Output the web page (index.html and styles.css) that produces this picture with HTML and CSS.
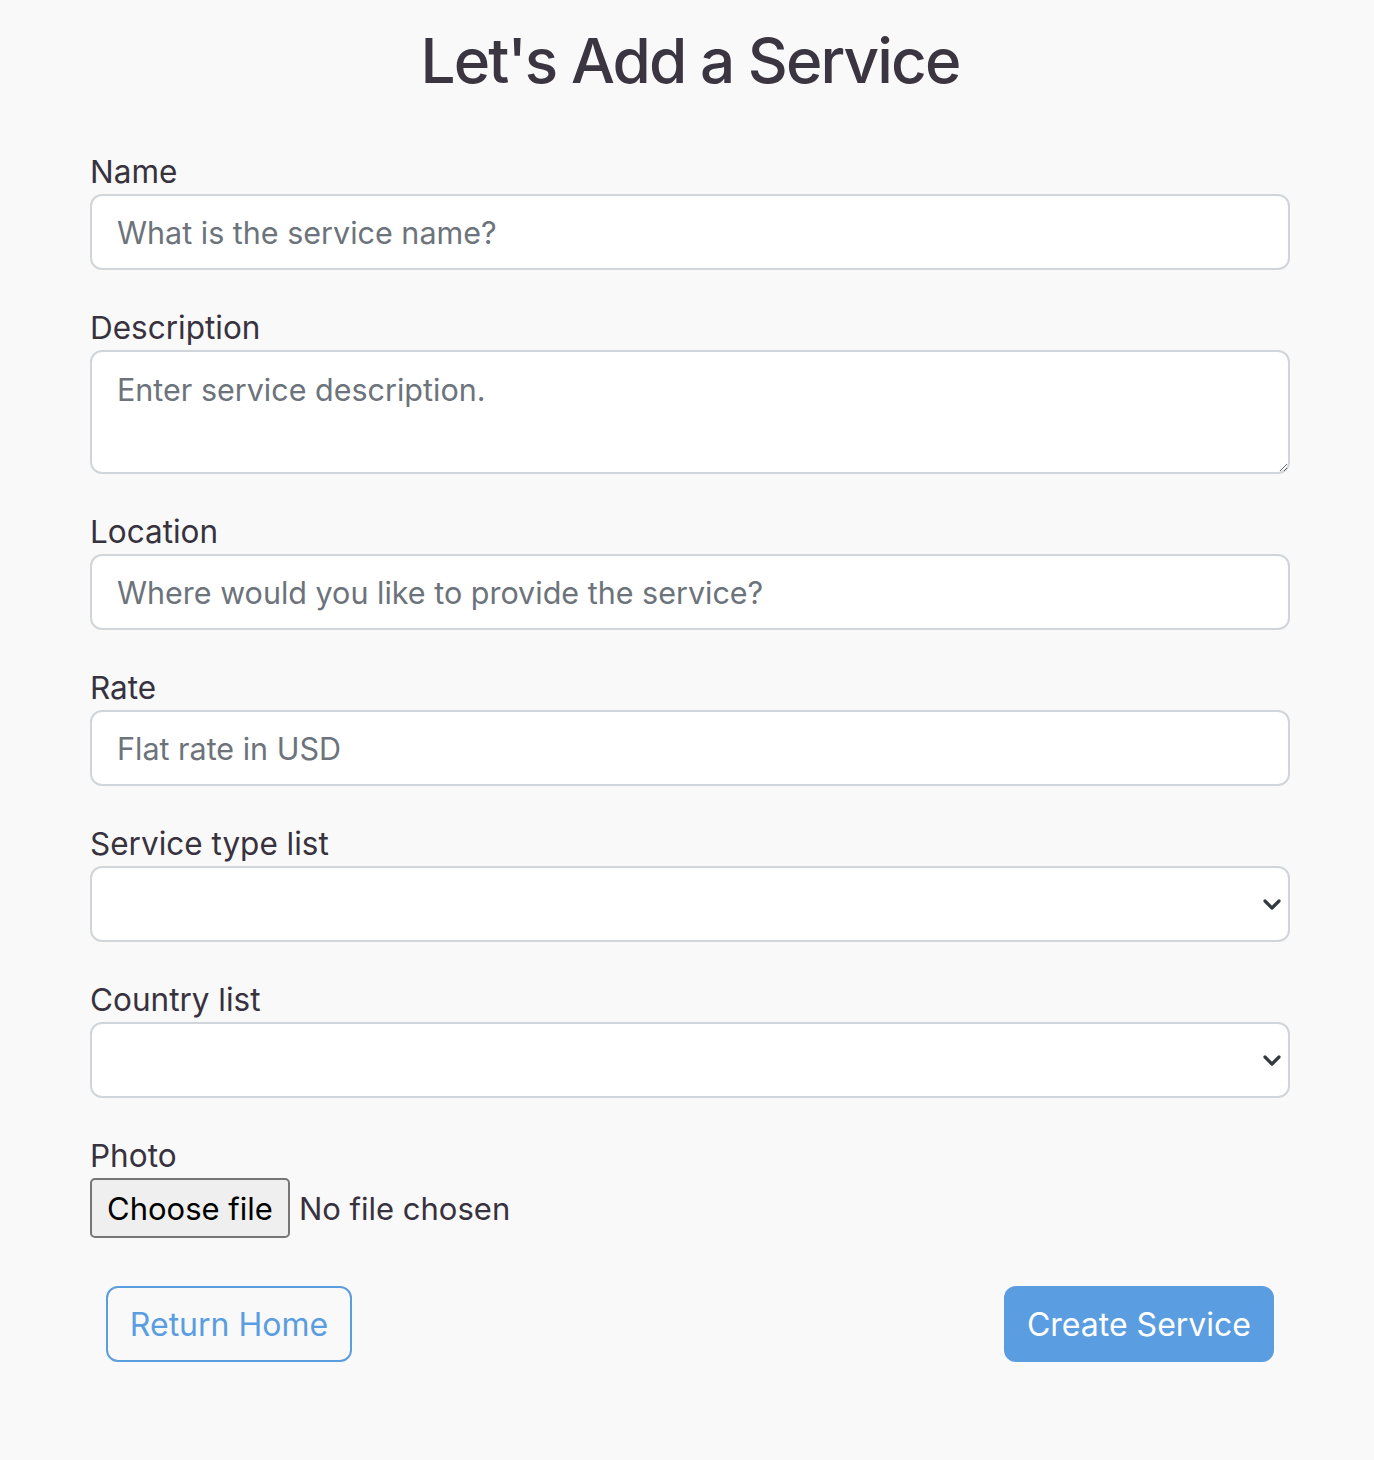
FILE: index.html
```html
<!DOCTYPE html>
<html lang="en">
<head>
<meta charset="utf-8">
<title>Let's Add a Service</title>
<link rel="stylesheet" href="styles.css">
</head>
<body>
<main class="page">
  <h1 class="title">Let's Add a Service</h1>
  <form class="form">
    <div class="group">
      <label class="label" for="name">Name</label>
      <input class="control" id="name" type="text" placeholder="What is the service name?">
    </div>
    <div class="group">
      <label class="label" for="desc">Description</label>
      <textarea class="control area" id="desc" placeholder="Enter service description."></textarea>
    </div>
    <div class="group">
      <label class="label" for="loc">Location</label>
      <input class="control" id="loc" type="text" placeholder="Where would you like to provide the service?">
    </div>
    <div class="group">
      <label class="label" for="rate">Rate</label>
      <input class="control" id="rate" type="text" placeholder="Flat rate in USD">
    </div>
    <div class="group">
      <label class="label" for="type">Service type list</label>
      <div class="select-wrap">
        <select class="control select" id="type"><option></option></select>
        <svg class="chevron" width="20" height="14" viewBox="0 0 20 14"><path d="M3 4l7 7 7-7" fill="none" stroke="#343a40" stroke-width="3.2" stroke-linecap="round" stroke-linejoin="round"/></svg>
      </div>
    </div>
    <div class="group">
      <label class="label" for="country">Country list</label>
      <div class="select-wrap">
        <select class="control select" id="country"><option></option></select>
        <svg class="chevron" width="20" height="14" viewBox="0 0 20 14"><path d="M3 4l7 7 7-7" fill="none" stroke="#343a40" stroke-width="3.2" stroke-linecap="round" stroke-linejoin="round"/></svg>
      </div>
    </div>
    <div class="group photo">
      <span class="label">Photo</span>
      <div class="file">
        <span class="file-btn">Choose file</span>
        <span class="file-text">No file chosen</span>
      </div>
    </div>
    <div class="actions">
      <a class="btn btn-outline" href="#">Return Home</a>
      <button class="btn btn-primary" type="button">Create Service</button>
    </div>
  </form>
</main>
</body>
</html>
```

FILE: styles.css
```css
* { box-sizing: border-box; }
html, body { margin: 0; padding: 0; }
body {
  background: #f9f9f9;
  font-family: Inter, "Noto Sans", sans-serif;
  color: #37323e;
  width: 1374px;
  min-height: 1460px;
}
.page {
  width: 1200px;
  margin-left: 90px;
  padding-top: 23px;
}
.title {
  margin: 0 0 50px;
  text-align: center;
  font-size: 62px;
  line-height: 76px;
  font-weight: 500;
  letter-spacing: -1.9px;
  color: #3a3541;
}
.form { display: flex; flex-direction: column; }
.group { display: flex; flex-direction: column; margin-bottom: 35px; }
.label {
  font-size: 31.5px;
  line-height: 45px;
  color: #37323e;
}
.control {
  display: block;
  width: 1200px;
  height: 76px;
  padding: 12px 25px;
  border: 2px solid #d1d5da;
  border-radius: 12px;
  background: #fff;
  font-family: inherit;
  font-size: 30.5px;
  line-height: 48px;
  color: #37323e;
  outline: none;
}
.control::placeholder { color: #6c737b; opacity: 1; }
.area { height: 124px; resize: vertical; padding-top: 14px; }
.select-wrap { position: relative; }
.select { appearance: none; -webkit-appearance: none; }
.chevron { position: absolute; right: 8px; top: 31px; }
.photo { margin-bottom: 48px; }
.file { display: flex; align-items: center; height: 60px; }
.file-btn {
  display: inline-flex;
  align-items: center;
  height: 60px;
  padding: 0 15px;
  background: #efefef;
  border: 2px solid #767676;
  border-radius: 5px;
  color: #000;
  font-size: 31px;
}
.file-text {
  margin-left: 9px;
  font-size: 31px;
  color: #37323e;
}
.actions {
  display: flex;
  justify-content: space-between;
  padding: 0 16px;
}
.btn {
  display: inline-flex;
  align-items: center;
  justify-content: center;
  height: 76px;
  padding: 0 20px;
  border-radius: 12px;
  font-family: inherit;
  font-size: 32px;
  text-decoration: none;
  cursor: pointer;
}
.btn-outline {
  width: 246px;
  border: 2px solid #5a9de0;
  color: #5a9de0;
  background: transparent;
}
.btn-primary {
  width: 270px;
  border: 2px solid #5a9de0;
  background: #5a9de0;
  color: #fff;
}
```
